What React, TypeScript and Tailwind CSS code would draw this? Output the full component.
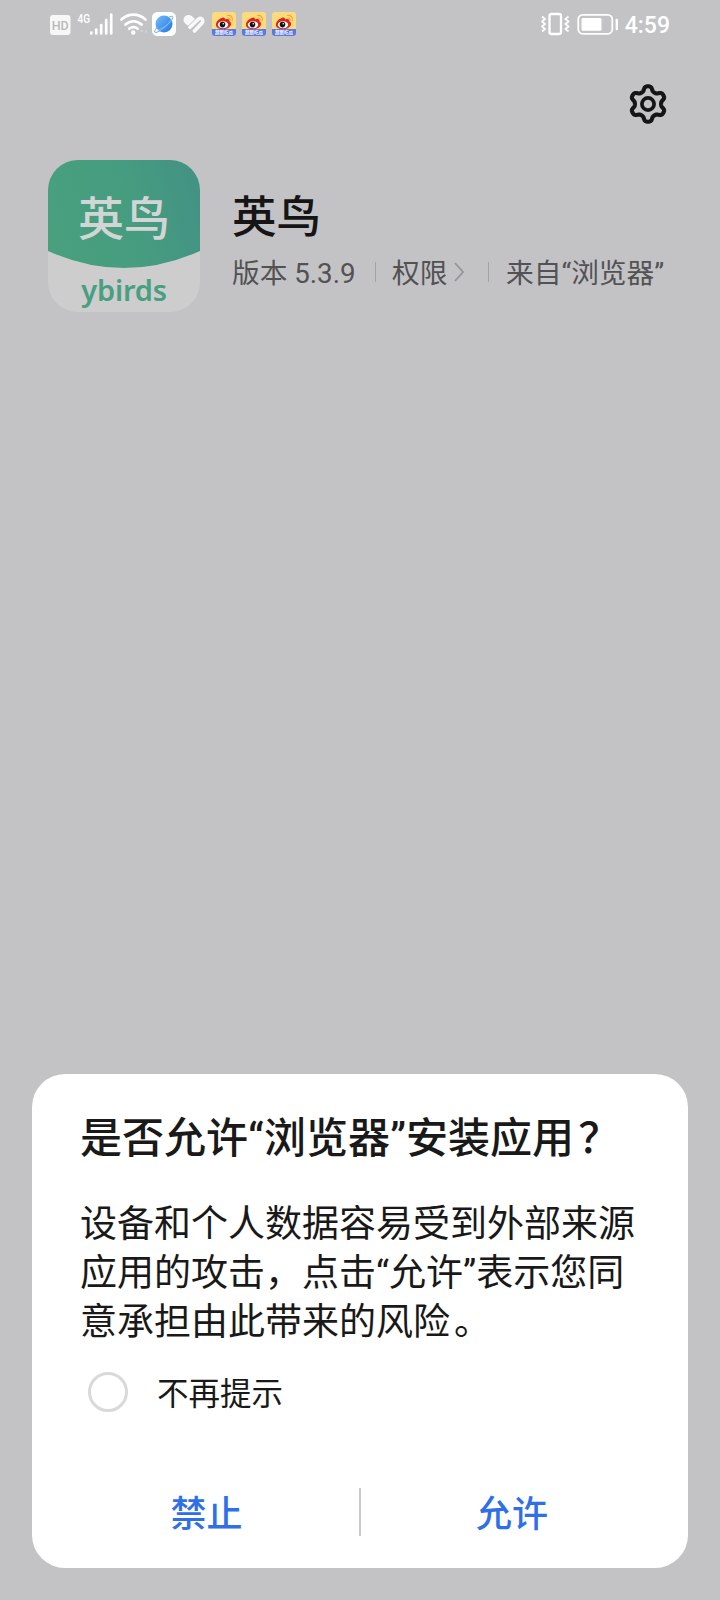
import React from "react";

function WeiboBadge() {
  return (
    <svg className="h-6 w-6" viewBox="0 0 24 24">
      <rect width="24" height="24" rx="3" fill="#fbdc7d" />
      <path d="M10 6c2-1 3 0 3 1.400 3-1 5 0 4.500 2 2 .8 2 3 1 4.300-2 3-6 4-10 3.300-3-.6-5-2.600-4.500-5C4.500 9 7.500 6.500 10 6z" fill="#d9251d" />
      <ellipse cx="11" cy="12.800" rx="5.200" ry="3.500" fill="#fff" />
      <circle cx="10.500" cy="12.600" r="2.800" fill="#161111" />
      <circle cx="11.300" cy="11.800" r=".8" fill="#fff" />
      <path d="M15.500 3.500c3.500-.5 5.500 2 4.800 5.200M15.800 6c1.800-.2 2.600 1 2.200 2.500" fill="none" stroke="#efa542" strokeWidth="1.200" strokeLinecap="round" />
      <path d="M0 17h24v4a3 3 0 0 1-3 3H3a3 3 0 0 1-3-3z" fill="#5b77e6" />
      <text x="12" y="22.400" textAnchor="middle" fontSize="4.500" fontWeight="700" fill="#fff" fontFamily="'Noto Sans CJK SC', sans-serif">
        超新吃瓜
      </text>
    </svg>
  );
}

function StatusBar() {
  return (
    <header className="flex h-12 items-center justify-between pr-[50px] pl-[50px] text-white">
      <div className="flex items-center">
        <svg className="h-6 w-[98px]" viewBox="50 12 98 24">
          <rect x="50" y="15" width="20.500" height="20" rx="3" fill="#f7f7f7" />
          <text x="60.200" y="29.800" textAnchor="middle" fontSize="12.500" fontWeight="500" fill="#b9b9bb" fontFamily="Roboto, sans-serif">HD</text>
          <text x="77.500" y="22.600" fontSize="12.500" fontWeight="500" textLength="12.500" lengthAdjust="spacingAndGlyphs" fill="#fff" fontFamily="Roboto, sans-serif">4G</text>
          <path d="M91.300 32.500v1M96.200 29.500v4M101.200 25v8.500M106.200 20v13.500M111.200 14.500v19" stroke="#fff" strokeWidth="2.700" strokeLinecap="round" />
          <path d="M121.500 19.500c7-6.600 17-6.600 24 0M125.500 24.500c5-4.300 11-4.300 16 0M129.300 28.700c2.800-2 5.500-2 8.300 0" fill="none" stroke="#fff" strokeWidth="2.700" strokeLinecap="round" />
          <circle cx="133.300" cy="32.500" r="2.200" fill="#fff" />
          <path d="M140.500 31h2.500M145 31.500h2" stroke="#d0d0d2" strokeWidth="2.500" />
        </svg>
        <svg className="ml-1 h-6 w-6" viewBox="0 0 24 24">
          <defs>
            <linearGradient id="globe" x1="0" y1="0" x2="1" y2="1">
              <stop offset="0" stopColor="#72c0fb" />
              <stop offset="1" stopColor="#2473df" />
            </linearGradient>
          </defs>
          <rect width="24" height="24" rx="5.500" fill="#fff" />
          <circle cx="12" cy="12" r="8.500" fill="url(#globe)" />
          <path d="M5 15.500C2.500 18.500 2 20 3.300 20.500c4 .5 17-10.500 17.500-15.200.1-1.500-1.600-1.300-4 0" fill="none" stroke="#6fabf0" strokeWidth="1" />
          <path d="M5.500 18c5-1 11-5.500 14-10.500" fill="none" stroke="#9fcaf8" strokeWidth=".8" />
        </svg>
        <svg className="ml-[7px] h-[22px] w-[22px]" viewBox="0 0 22 22" fill="none" stroke="#f8f8f8" strokeLinecap="round" strokeLinejoin="round">
          <path d="M.8 8.500C-.8 3.500 5 .2 8.700 3L12 6 5 12.800C3 11.300 1.500 10 .8 8.500z" fill="#f8f8f8" stroke="none" />
          <path d="m7 14.200 8-7.700q2.600-2.300 4.200-.3 1.400 2-.5 4L11.500 18" strokeWidth="3.600" />
        </svg>
        <div className="ml-[7px] flex gap-1.5">
          <WeiboBadge />
          <WeiboBadge />
          <WeiboBadge />
        </div>
      </div>
      <div className="flex items-center">
        <svg className="h-6 w-[78px]" viewBox="541 12 78 24" fill="none" stroke="#fff">
          <rect x="549.500" y="14" width="11.500" height="20" rx="2" strokeWidth="2.300" />
          <path d="m542 16.500 3 2.500-3 2.500 3 2.500-3 2.500 3 2.500-3 2.500M568.500 16.500l-3 2.500 3 2.500-3 2.500 3 2.500-3 2.500 3 2.500" strokeWidth="1.800" />
          <rect x="578.300" y="14.800" width="34" height="19" rx="4.500" strokeWidth="1.800" />
          <rect x="581.500" y="18" width="20" height="12.800" rx="1.500" fill="#fff" stroke="none" />
          <path d="M616.800 20v9" strokeWidth="2.400" strokeLinecap="round" />
        </svg>
        <span className="ml-1.5 pt-[3px] font-[Roboto,sans-serif] text-[23px] leading-6 font-medium">4:59</span>
      </div>
    </header>
  );
}

const gearPoints = Array.from({ length: 180 }, (_, i) => {
  const angle = (i * Math.PI) / 90;
  const radius = 15.4 + 2.5 * Math.tanh(1.6 * Math.cos(6 * angle));
  return `${(22 + radius * Math.sin(angle)).toFixed(2)},${(22 - radius * Math.cos(angle)).toFixed(2)}`;
}).join(" ");

function GearIcon() {
  return (
    <svg className="h-11 w-11" viewBox="0 0 44 44" fill="none" stroke="#151516" strokeLinejoin="round">
      <polygon points={gearPoints} strokeWidth="4.100" />
      <circle cx="22" cy="22" r="6.100" strokeWidth="3.700" />
    </svg>
  );
}

function AppIcon() {
  return (
    <div className="relative h-[152px] w-[152px] shrink-0 overflow-hidden rounded-[30px] bg-[#cdcdce]">
      <svg className="absolute inset-0 h-full w-full" viewBox="0 0 152 152">
        <defs>
          <linearGradient id="leaf" x1="0" x2="1" y1=".6" y2=".4">
            <stop offset="0" stopColor="#48a07f" />
            <stop offset=".55" stopColor="#469c7f" />
            <stop offset="1" stopColor="#439384" />
          </linearGradient>
        </defs>
        <path d="M0 0h152v91Q76 125 0 91z" fill="url(#leaf)" />
      </svg>
      <div className="relative flex flex-col items-center text-center">
        <span className="mt-[35px] text-[46px] leading-[48px] font-medium text-[#d1d6d4]">英鸟</span>
        <span className="mt-[31px] font-['Noto_Sans',sans-serif] text-[29px] leading-8 font-semibold tracking-[-0.2px] text-[#489f82]">ybirds</span>
      </div>
    </div>
  );
}

function AppHeader() {
  return (
    <section className="flex pl-12">
      <AppIcon />
      <div className="ml-[32px] pt-[33px]">
        <h1 className="text-[44.500px] leading-[50px] font-medium text-[#151516]">英鸟</h1>
        <div className="mt-[13px] flex h-9 items-center text-[27.700px] leading-9 whitespace-nowrap text-[#525254]">
          <span className="w-[143px]">版本 5.3.9</span>
          <span className="mb-1 h-5 w-px bg-[#a2a2a4]" />
          <span className="ml-[16px] w-[62px]">权限</span>
          <svg className="mb-1 h-5 w-[10px]" viewBox="0 0 10 20" fill="none" stroke="#949496" strokeWidth="1.700">
            <path d="m1 1 8 9-8 9" />
          </svg>
          <span className="mb-1 ml-[24px] h-5 w-px bg-[#a2a2a4]" />
          <span className="ml-[17px]">来自“浏览器”</span>
        </div>
      </div>
    </section>
  );
}

function InstallDialog() {
  return (
    <section className="mx-8 mt-auto mb-8 flex h-[494px] flex-col rounded-[33px] bg-white text-[#191919]">
      <h2 className="mt-[39px] pl-[48px] text-[42px] leading-[52px] font-medium whitespace-nowrap">
        是否允许“浏览器”安装应用<span className="ml-[4px]">？</span>
      </h2>
      <p className="mt-[35px] pl-[48px] text-[37px] leading-[49px] whitespace-nowrap">
        设备和个人数据容易受到外部来源
        <br />
        应用的攻击，点击“允许”表示您同
        <br />
        意承担由此带来的风险<span className="ml-[4px]">。</span>
      </p>
      <label className="mt-[25px] flex h-10 items-center pl-14">
        <input type="checkbox" className="h-10 w-10 appearance-none rounded-full border-[3px] border-[#d9d9d9]" />
        <span className="ml-[29px] pt-[5px] text-[31.500px] leading-10">不再提示</span>
      </label>
      <div className="mt-[76px] flex h-12 items-center pr-[25px] pl-[22px] text-[36px] leading-[48px] font-medium text-[#2f70e8]">
        <button className="w-[305px] pt-1.5">禁止</button>
        <span className="h-12 w-0.5 bg-[#cacaca]" />
        <button className="flex-1 pt-1.5">允许</button>
      </div>
    </section>
  );
}

export default function App() {
  return (
    <main lang="zh-CN" className="flex h-[1600px] w-[720px] flex-col overflow-hidden bg-[#c3c3c5] font-[Roboto,'Noto_Sans_CJK_SC',sans-serif]">
      <StatusBar />
      <div className="flex h-28 justify-end pt-[34px] pr-[50px]">
        <button className="h-11 w-11" aria-label="设置">
          <GearIcon />
        </button>
      </div>
      <AppHeader />
      <InstallDialog />
    </main>
  );
}
